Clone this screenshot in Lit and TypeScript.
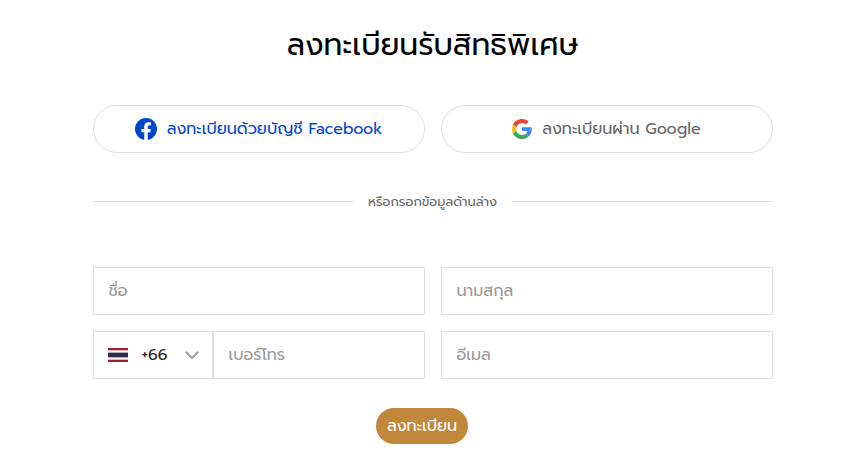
import { LitElement, html, css } from "lit";
import { customElement } from "lit/decorators.js";

const facebookIcon = html`<svg viewBox="0 0 24 24" width="22" height="22"><circle cx="12" cy="12" r="12" fill="#0047cc"/><path fill="#fff" d="M10.100 24V15.600H7V12h3.100V9.400C10.100 6.300 11.900 4.700 14.700 4.700c1.300 0 2.700.2 2.700.2v3h-1.500c-1.500 0-2 .9-2 1.900V12h3.300l-.5 3.600h-2.800V24z"/></svg>`;

const googleIcon = html`<svg viewBox="0 0 48 48" width="20" height="20"><path fill="#EA4335" d="M24 9.500c3.540 0 6.710 1.220 9.210 3.600l6.850-6.850C35.900 2.380 30.470 0 24 0 14.620 0 6.510 5.380 2.560 13.220l7.980 6.190C12.430 13.720 17.740 9.500 24 9.500z"/><path fill="#4285F4" d="M47.500 24.550c0-1.570-.15-3.090-.38-4.550H24v9.020h12.940c-.58 2.960-2.260 5.480-4.780 7.180l7.730 6c4.510-4.180 7.610-10.360 7.610-17.650z"/><path fill="#FBBC05" d="M10.530 28.590c-.48-1.450-.76-2.990-.76-4.590s.27-3.140.76-4.590l-7.980-6.190C.92 16.460 0 20.120 0 24s.92 7.540 2.560 10.780z"/><path fill="#34A853" d="M24 48c6.480 0 11.930-2.130 15.890-5.810l-7.730-6c-2.150 1.450-4.920 2.300-8.160 2.300-6.260 0-11.570-4.220-13.470-9.910l-7.980 6.190C6.510 42.620 14.620 48 24 48z"/></svg>`;

const thaiFlag = html`<svg viewBox="0 0 20 14" width="20" height="14"><path fill="#f4f5f8" d="M0 0h20v14H0z"/><path fill="#a51931" d="M0 0h20v2.330H0zM0 11.670h20V14H0z"/><path fill="#2d2a4a" d="M0 4.670h20v4.660H0z"/></svg>`;

const chevron = html`<svg viewBox="0 0 14 8" width="14" height="8"><path d="M.7.7 7 7 13.300.7" fill="none" stroke="#999" stroke-width="1.900"/></svg>`;

@customElement("app-root")
export class AppRoot extends LitElement {
  static styles = css`
    :host {
      display: block;
      box-sizing: border-box;
      height: 464px;
      padding: 20px 74px 0 93px;
      overflow: hidden;
      background: #fff;
      font: 400 16px/24px Prompt, "Noto Sans Thai", "Noto Sans", sans-serif;
    }
    * { box-sizing: border-box; }
    svg { display: block; flex: none; }
    h1 {
      margin: 0 0 36px;
      padding: 1px 1px 0 0;
      font-size: 30px;
      line-height: 48px;
      font-weight: 400;
      text-align: center;
      color: #000;
    }
    .grid {
      display: grid;
      grid-template-columns: 1fr 1fr;
      gap: 16px;
    }
    button { font: inherit; cursor: pointer; }
    .social {
      display: flex;
      align-items: center;
      justify-content: center;
      gap: 10px;
      height: 48px;
      padding: 0 1px 0 0;
      border: 1px solid #dfdfe3;
      border-radius: 24px;
      background: #fff;
      color: #666;
    }
    .facebook { color: #0047cc; }
    .divider {
      display: flex;
      align-items: center;
      gap: 15px;
      height: 19px;
      margin: 39px 0 56px;
      font-size: 13px;
      line-height: 19px;
      color: #666;
    }
    .divider::before,
    .divider::after {
      content: "";
      flex: 1;
      height: 1px;
      background: #dfdfe3;
    }
    .divider::before { flex: 0 0 260px; }
    .divider span { width: 129px; white-space: nowrap; }
    .field {
      width: 100%;
      min-width: 0;
      height: 48px;
      padding: 0 14px 0 14.500px;
      border: 1px solid #dfdfdf;
      border-radius: 0;
      outline: none;
      background: #fff;
      font: inherit;
      color: #222;
    }
    .field::placeholder { color: #999; opacity: 1; }
    .phone { display: flex; }
    .phone .field { border-color: #dfdfe3; }
    .code {
      display: flex;
      align-items: center;
      flex: none;
      width: 120px;
      height: 48px;
      padding: 0 13px 0 14px;
      border: 1px solid #dfdfe3;
      background: #fff;
      color: #222;
    }
    .code span { margin: 0 auto 0 13.500px; }
    .submit {
      display: block;
      width: 92px;
      height: 36px;
      margin: 29px auto 0 283px;
      padding: 0;
      border: 0;
      border-radius: 18px;
      background: #c1873b;
      color: #fff;
    }
  `;

  render() {
    return html`
      <h1>ลงทะเบียนรับสิทธิพิเศษ</h1>
      <div class="grid">
        <button class="social facebook">${facebookIcon}<span>ลงทะเบียนด้วยบัญชี Facebook</span></button>
        <button class="social">${googleIcon}<span>ลงทะเบียนผ่าน Google</span></button>
      </div>
      <div class="divider"><span>หรือกรอกข้อมูลด้านล่าง</span></div>
      <div class="grid">
        <input class="field" placeholder="ชื่อ">
        <input class="field" placeholder="นามสกุล">
        <div class="phone">
          <button class="code">${thaiFlag}<span>+66</span>${chevron}</button>
          <input class="field" placeholder="เบอร์โทร">
        </div>
        <input class="field" placeholder="อีเมล">
      </div>
      <button class="submit">ลงทะเบียน</button>
    `;
  }
}
